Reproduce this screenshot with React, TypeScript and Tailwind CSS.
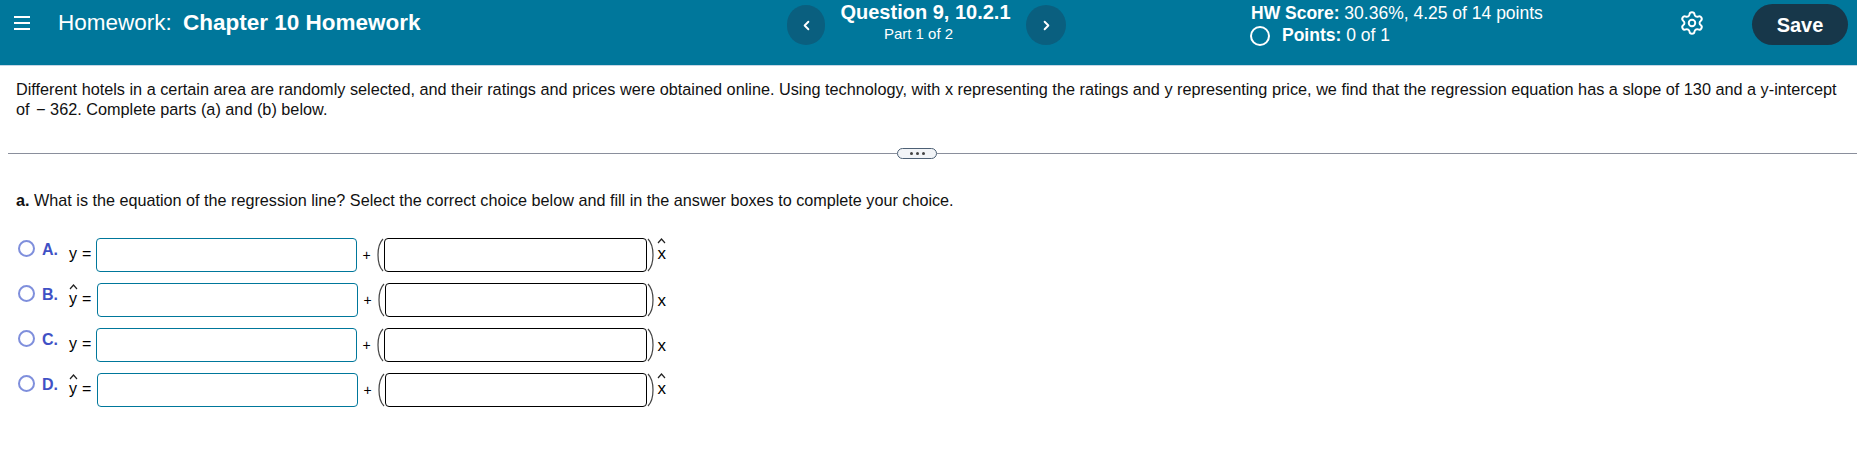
import { ChevronLeft, ChevronRight, Settings } from "lucide-react"

const Paren = ({ flip }: { flip?: boolean }) => (
  <svg width="7" height="34" viewBox="0 0 7 34" className={flip ? "-scale-x-100" : ""}>
    <path d="M6 1C2 5 1 11 1 17s1 12 5 16" fill="none" stroke="#444" strokeWidth="1.2" />
  </svg>
)

const Hat = ({ letter }: { letter: string }) => (
  <span className="relative inline-block">
    <svg width="9" height="6" viewBox="0 0 9 6" className="absolute left-[-0.5px] top-[-3px]">
      <path d="M1 5l3.5-4L8 5" fill="none" stroke="#222" strokeWidth="1.2" />
    </svg>
    {letter}
  </span>
)

const options = [
  { label: "A.", yHat: false, xHat: true },
  { label: "B.", yHat: true, xHat: false },
  { label: "C.", yHat: false, xHat: false },
  { label: "D.", yHat: true, xHat: true },
]

const Option = ({ label, yHat, xHat }: { label: string; yHat: boolean; xHat: boolean }) => (
  <div className="flex h-[34px] items-start text-black">
    <span className="ml-[18px] mt-[2px] h-[17px] w-[17px] rounded-full border-[2px] border-[#7f8fdc]"></span>
    <span className="ml-[7px] w-[27px] pt-[2px] text-[16px] font-bold leading-[20px] text-[#3f51c5]">{label}</span>
    <span className={`flex h-full items-center pb-[2px] text-[16px] ${yHat ? "w-[28px]" : "w-[27px]"}`}>
      <span className="w-[10px]">{yHat ? <Hat letter="y" /> : "y"}</span>
      <span className="ml-[3px]">=</span>
    </span>
    <div className="h-[34px] flex-1 rounded-[4px] border border-[#00779b]"></div>
    <span className="ml-[4px] flex h-full w-[12px] items-center justify-center text-[14px]">+</span>
    <span className="ml-[4px] flex h-full items-center"><Paren /></span>
    <div className={`h-[34px] rounded-[4px] border border-black ${yHat ? "w-[262px]" : "w-[263px]"}`}></div>
    <span className="flex h-full items-center"><Paren flip /></span>
    <span className={`ml-[4px] flex h-full items-center text-[17px] ${xHat ? "pb-[3px]" : "pt-[1px]"}`}>{xHat ? <Hat letter="x" /> : "x"}</span>
  </div>
)

export default function App() {
  return (
    <div className="h-[466px] w-[1857px] overflow-hidden bg-white font-['Liberation_Sans',Arial,sans-serif]">
      <header className="flex h-[66px] border-b border-[#c5d6e6] bg-[#00779b] text-white">
        <div className="ml-[14px] mt-[16px] flex h-[14px] w-[16px] flex-col justify-between">
          <span className="h-[2px] bg-white"></span>
          <span className="h-[2px] bg-white"></span>
          <span className="h-[2px] bg-white"></span>
        </div>
        <div className="ml-[28px] mt-[10px] w-[729px] text-[22.5px] leading-[26px]">
          Homework: <span className="ml-[5px] font-bold">Chapter 10 Homework</span>
        </div>
        <button className="mt-[5px] flex h-[40px] w-[38px] items-center justify-center rounded-full bg-[#0a5f7f]">
          <ChevronLeft size={15} strokeWidth={3} />
        </button>
        <div className="w-[201px] whitespace-nowrap pt-[1px] text-center">
          <div className="text-[20px] font-bold leading-[22px]">Question 9, 10.2.1</div>
          <div className="mt-[2px] pr-[14px] text-[15px] leading-[18px]">Part 1 of 2</div>
        </div>
        <button className="mt-[5px] flex h-[40px] w-[40px] items-center justify-center rounded-full bg-[#0a5f7f]">
          <ChevronRight size={15} strokeWidth={3} />
        </button>
        <div className="ml-[184px] w-[429px] pt-[3px] text-[17.5px] leading-[21px]">
          <div className="ml-[1px]"><span className="font-bold">HW Score:</span> 30.36%, 4.25 of 14 points</div>
          <div className="mt-[1px] flex items-center">
            <span className="h-[20px] w-[20px] rounded-full border-[2.5px] border-white"></span>
            <span className="ml-[12px]"><span className="font-bold">Points:</span> 0 of 1</span>
          </div>
        </div>
        <Settings size={26} strokeWidth={1.8} className="mt-[10px]" />
        <button className="ml-[47px] mt-[4px] h-[41px] w-[96px] rounded-full bg-[#17374a] text-[20px] font-bold">Save</button>
      </header>

      <p className="ml-[16px] mt-[13px] w-[1835px] text-[16.25px] leading-[20px] text-[#111]">
        Different hotels in a certain area are randomly selected, and their ratings and prices were obtained online. Using technology, with x representing the ratings and y representing price, we find that the regression equation has a slope of 130 and a y-intercept
        <br />
        of <span className="ml-[2px]">−</span> 362. Complete parts (a) and (b) below.
      </p>

      <div className="ml-[8px] mt-[29px] flex h-[11px] items-center">
        <div className="h-px w-[889px] bg-[#8a8f9c]"></div>
        <div className="flex h-[11px] w-[40px] items-center justify-center gap-[3px] rounded-full border border-[#4d6075] bg-[#f2f4f7]">
          <span className="h-[3px] w-[3px] rounded-full bg-[#444]"></span>
          <span className="h-[3px] w-[3px] rounded-full bg-[#444]"></span>
          <span className="h-[3px] w-[3px] rounded-full bg-[#444]"></span>
        </div>
        <div className="h-px flex-1 bg-[#8a8f9c]"></div>
      </div>

      <p className="ml-[16px] mt-[32px] text-[16.2px] leading-[19px] text-[#111]">
        <span className="font-bold">a.</span> What is the equation of the regression line? Select the correct choice below and fill in the answer boxes to complete your choice.
      </p>

      <div className="mt-[28px] flex w-[666px] flex-col gap-[11px]">
        {options.map((o) => (
          <Option key={o.label} {...o} />
        ))}
      </div>
    </div>
  )
}
